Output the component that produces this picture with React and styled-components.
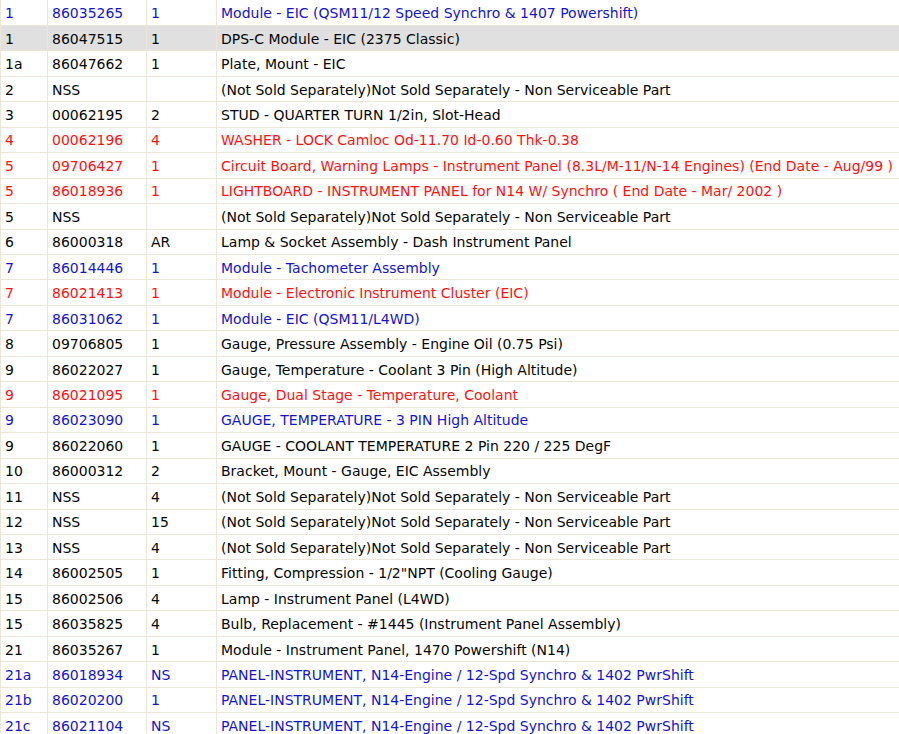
import React from 'react'
import styled, { createGlobalStyle } from 'styled-components'

const GlobalStyle = createGlobalStyle`
  html, body {
    margin: 0;
    padding: 0;
    background: #ffffff;
    overflow: hidden;
  }
`

const parts = [
  ['1', '86035265', '1', 'Module - EIC (QSM11/12 Speed Synchro & 1407 Powershift)', 'blue'],
  ['1', '86047515', '1', 'DPS-C Module - EIC (2375 Classic)', 'black', true],
  ['1a', '86047662', '1', 'Plate, Mount - EIC', 'black'],
  ['2', 'NSS', '', '(Not Sold Separately)Not Sold Separately - Non Serviceable Part', 'black'],
  ['3', '00062195', '2', 'STUD - QUARTER TURN 1/2in, Slot-Head', 'black'],
  ['4', '00062196', '4', 'WASHER - LOCK Camloc Od-11.70 Id-0.60 Thk-0.38', 'red'],
  ['5', '09706427', '1', 'Circuit Board, Warning Lamps - Instrument Panel (8.3L/M-11/N-14 Engines) (End Date - Aug/99 )', 'red'],
  ['5', '86018936', '1', 'LIGHTBOARD - INSTRUMENT PANEL for N14 W/ Synchro ( End Date - Mar/ 2002 )', 'red'],
  ['5', 'NSS', '', '(Not Sold Separately)Not Sold Separately - Non Serviceable Part', 'black'],
  ['6', '86000318', 'AR', 'Lamp & Socket Assembly - Dash Instrument Panel', 'black'],
  ['7', '86014446', '1', 'Module - Tachometer Assembly', 'blue'],
  ['7', '86021413', '1', 'Module - Electronic Instrument Cluster (EIC)', 'red'],
  ['7', '86031062', '1', 'Module - EIC (QSM11/L4WD)', 'blue'],
  ['8', '09706805', '1', 'Gauge, Pressure Assembly - Engine Oil (0.75 Psi)', 'black'],
  ['9', '86022027', '1', 'Gauge, Temperature - Coolant 3 Pin (High Altitude)', 'black'],
  ['9', '86021095', '1', 'Gauge, Dual Stage - Temperature, Coolant', 'red'],
  ['9', '86023090', '1', 'GAUGE, TEMPERATURE - 3 PIN High Altitude', 'blue'],
  ['9', '86022060', '1', 'GAUGE - COOLANT TEMPERATURE 2 Pin 220 / 225 DegF', 'black'],
  ['10', '86000312', '2', 'Bracket, Mount - Gauge, EIC Assembly', 'black'],
  ['11', 'NSS', '4', '(Not Sold Separately)Not Sold Separately - Non Serviceable Part', 'black'],
  ['12', 'NSS', '15', '(Not Sold Separately)Not Sold Separately - Non Serviceable Part', 'black'],
  ['13', 'NSS', '4', '(Not Sold Separately)Not Sold Separately - Non Serviceable Part', 'black'],
  ['14', '86002505', '1', 'Fitting, Compression - 1/2"NPT (Cooling Gauge)', 'black'],
  ['15', '86002506', '4', 'Lamp - Instrument Panel (L4WD)', 'black'],
  ['15', '86035825', '4', 'Bulb, Replacement - #1445 (Instrument Panel Assembly)', 'black'],
  ['21', '86035267', '1', 'Module - Instrument Panel, 1470 Powershift (N14)', 'black'],
  ['21a', '86018934', 'NS', 'PANEL-INSTRUMENT, N14-Engine / 12-Spd Synchro & 1402 PwrShift', 'blue'],
  ['21b', '86020200', '1', 'PANEL-INSTRUMENT, N14-Engine / 12-Spd Synchro & 1402 PwrShift', 'blue'],
  ['21c', '86021104', 'NS', 'PANEL-INSTRUMENT, N14-Engine / 12-Spd Synchro & 1402 PwrShift', 'blue'],
]

const tones = {
  black: '#050505',
  blue: '#1414cc',
  red: '#ff1111',
}

const App = () => {
  return (
    <>
      <GlobalStyle />
      <Frame>
        <PartsTable>
          <colgroup>
            <Col $w={47} />
            <Col $w={99} />
            <Col $w={70} />
            <Col $w={760} />
          </colgroup>
          <tbody>
            {parts.map((p, i) => (
              <Row key={i} $tone={p[4]} $selected={p[5]}>
                <Cell>{p[0]}</Cell>
                <Cell>{p[1]}</Cell>
                <Cell>{p[2]}</Cell>
                <Cell>{p[3]}</Cell>
              </Row>
            ))}
          </tbody>
        </PartsTable>
      </Frame>
    </>
  )
}

const Frame = styled.div`
  width: 899px;
  height: 734px;
  overflow: hidden;
`

const PartsTable = styled.table`
  border-collapse: collapse;
  table-layout: fixed;
  width: 976px;
  font-family: 'DejaVu Sans', Verdana, sans-serif;
  font-size: 14px;
`

const Col = styled.col`
  width: ${(props) => props.$w}px;
`

const Row = styled.tr`
  height: 25.46px;
  color: ${(props) => tones[props.$tone]};
  background-color: ${(props) => (props.$selected ? '#e0e0e0' : '#ffffff')};
`

const Cell = styled.td`
  border: 1px solid #ebe6d8;
  border-top: none;
  padding: 1px 4px 0;
  white-space: nowrap;
  overflow: hidden;
  vertical-align: middle;
`

export default App
